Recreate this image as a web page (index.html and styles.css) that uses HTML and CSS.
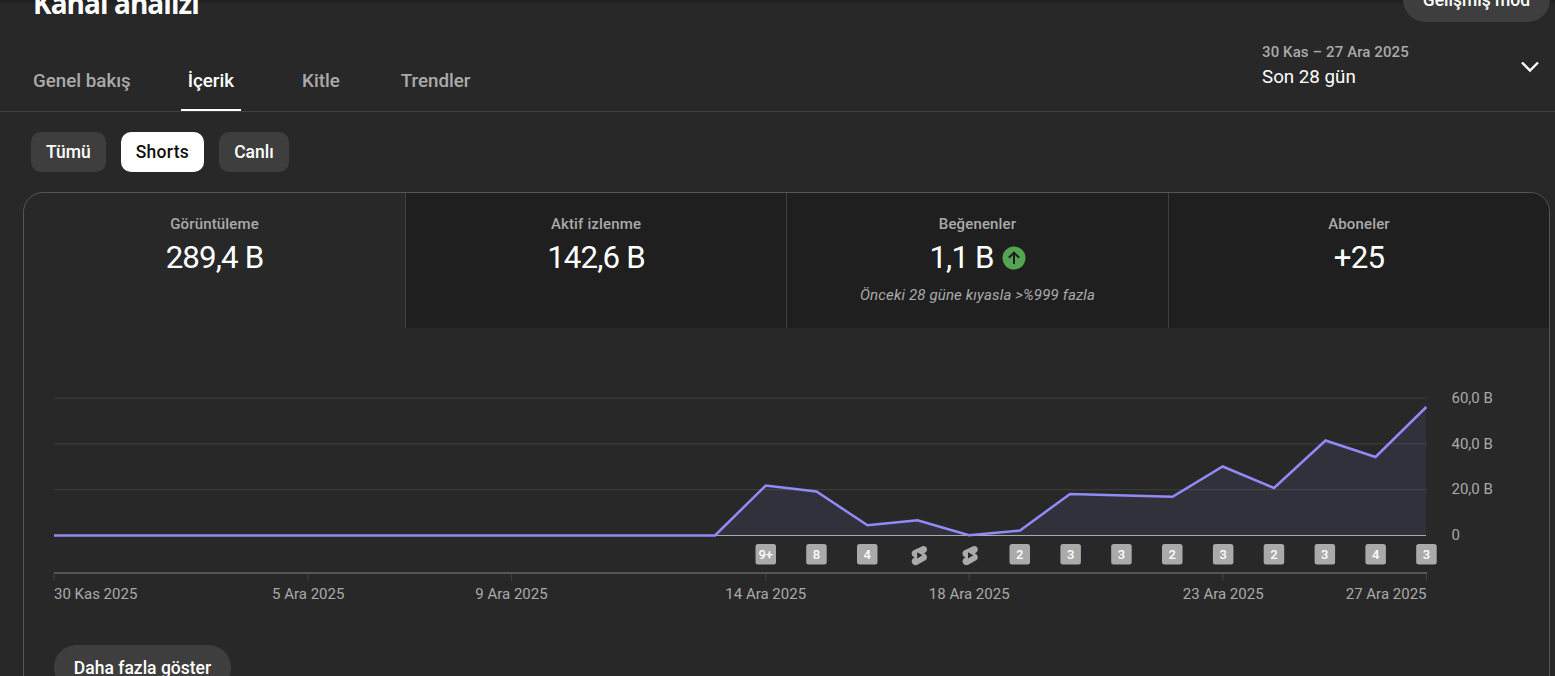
FILE: index.html
```html
<!DOCTYPE html>
<html lang="tr">
<head>
  <meta charset="UTF-8">
  <title>Kanal analizi</title>
  <link rel="stylesheet" href="styles.css">
</head>
<body>
  <div class="page">
    <header class="header">
      <h1>Kanal analizi</h1>
      <button class="pill advanced">Gelişmiş mod</button>
    </header>

    <div class="toolbar">
      <nav class="tabs">
        <a class="tab">Genel bakış</a>
        <a class="tab active">İçerik</a>
        <a class="tab audience">Kitle</a>
        <a class="tab trends">Trendler</a>
      </nav>
      <div class="date-picker">
        <div>
          <div class="date-range">30 Kas – 27 Ara 2025</div>
          <div class="date-label">Son 28 gün</div>
        </div>
        <svg class="chevron" width="20" height="14" viewBox="0 0 20 14">
          <path d="M2 2.500l8 8 8-8" fill="none" stroke="#fff" stroke-width="2.4"/>
        </svg>
      </div>
    </div>

    <div class="chips">
      <button class="chip">Tümü</button>
      <button class="chip selected">Shorts</button>
      <button class="chip">Canlı</button>
    </div>

    <section class="card">
      <div class="metrics">
        <div class="metric current">
          <div class="metric-name">Görüntüleme</div>
          <div class="metric-value">289,4 B</div>
        </div>
        <div class="metric">
          <div class="metric-name">Aktif izlenme</div>
          <div class="metric-value">142,6 B</div>
        </div>
        <div class="metric">
          <div class="metric-name">Beğenenler</div>
          <div class="metric-value">
            1,1 B
            <svg width="24" height="24" viewBox="0 0 24 24">
              <circle cx="12" cy="12" r="11.5" fill="#53a551"/>
              <path d="M12 18V7M6.8 11.8L12 6.6l5.2 5.2" fill="none" stroke="#1f1f1f" stroke-width="2"/>
            </svg>
          </div>
          <div class="metric-note">Önceki 28 güne kıyasla &gt;%999 fazla</div>
        </div>
        <div class="metric">
          <div class="metric-name">Aboneler</div>
          <div class="metric-value">+25</div>
        </div>
      </div>

      <svg class="chart" width="1525" height="317" viewBox="24 328 1525 317">
        <defs>
          <g id="short">
            <path d="M2.6 -8.9C5 -10.2 7.2 -8.8 7.7 -6.8C8.1 -5 7.3 -3.4 5.9 -2.5L4.7 -1.8C6.3 -1.5 7.4 -.3 7.7 1.2C8 3 7.1 4.5 5.7 5.3L-1.8 9.4C-4 10.6 -6.5 9.5 -7.3 7.3C-7.9 5.4 -7.1 3.5 -5.5 2.6L-4.4 2C-6 1.7 -7.2 .6 -7.5 -1C-7.8 -2.7 -7 -4.3 -5.5 -5.1Z" fill="#aaa"/>
            <path d="M-2 -3.1L3.3 0L-2 3.1Z" fill="#282828"/>
          </g>
        </defs>

        <!-- grid -->
        <g stroke="#3b3b3b" stroke-width="1.25">
          <path d="M54 398H1427M54 443.8H1427M54 489.5H1427"/>
        </g>
        <path d="M54 535.5H1426" stroke="#aaa" stroke-width="1"/>

        <!-- views -->
        <path d="M715 535L765.7 485.5L816.5 491.5L867.5 525.3L917.5 520.3L969 535.3L1020 530.5L1070 494L1172.5 496.7L1222.7 466.5L1274 488L1325.5 440.5L1375.5 457L1426 407V535Z" fill="#8383e0" fill-opacity=".11"/>
        <path d="M54 535.5H715L765.7 485.5L816.5 491.5L867.5 525.3L917.5 520.3L969 535.3L1020 530.5L1070 494L1172.5 496.7L1222.7 466.5L1274 488L1325.5 440.5L1375.5 457L1426.3 407" fill="none" stroke="#918bf8" stroke-width="2.5"/>

        <g class="axis-text">
          <text x="1451.5" y="403">60,0 B</text>
          <text x="1451.5" y="449">40,0 B</text>
          <text x="1451.5" y="494">20,0 B</text>
          <text x="1451.5" y="540">0</text>
        </g>

        <!-- published videos per day -->
        <g fill="#aaa">
          <rect x="755.5" y="544" width="20.5" height="20.5" rx="2.5"/>
          <rect x="806.2" y="544" width="20.5" height="20.5" rx="2.5"/>
          <rect x="857" y="544" width="20.5" height="20.5" rx="2.5"/>
          <rect x="1009.5" y="544" width="20.5" height="20.5" rx="2.5"/>
          <rect x="1060.4" y="544" width="20.5" height="20.5" rx="2.5"/>
          <rect x="1111.2" y="544" width="20.5" height="20.5" rx="2.5"/>
          <rect x="1162" y="544" width="20.5" height="20.5" rx="2.5"/>
          <rect x="1212.9" y="544" width="20.5" height="20.5" rx="2.5"/>
          <rect x="1263.7" y="544" width="20.5" height="20.5" rx="2.5"/>
          <rect x="1314.6" y="544" width="20.5" height="20.5" rx="2.5"/>
          <rect x="1365.4" y="544" width="20.5" height="20.5" rx="2.5"/>
          <rect x="1416.2" y="544" width="20.5" height="20.5" rx="2.5"/>
        </g>
        <use href="#short" x="919.2" y="555.3"/>
        <use href="#short" x="970" y="555.3"/>
        <g class="badge-text">
          <text x="765.7" y="559">9+</text>
          <text x="816.5" y="559">8</text>
          <text x="867.3" y="559">4</text>
          <text x="1019.8" y="559">2</text>
          <text x="1070.6" y="559">3</text>
          <text x="1121.4" y="559">3</text>
          <text x="1172.3" y="559">2</text>
          <text x="1223.1" y="559">3</text>
          <text x="1273.9" y="559">2</text>
          <text x="1324.8" y="559">3</text>
          <text x="1375.6" y="559">4</text>
          <text x="1426.4" y="559">3</text>
        </g>

        <!-- dates -->
        <path d="M54 573H1427" stroke="#555" stroke-width="2"/>
        <path d="M54 574V581M308 574V581M511.5 574V581M765.7 574V581M969 574V581M1223 574V581M1426.5 574V581" stroke="#3e3e3e" stroke-width="1.25"/>
        <g class="axis-text">
          <text x="54" y="599">30 Kas 2025</text>
          <text x="308.2" y="599" text-anchor="middle">5 Ara 2025</text>
          <text x="511.5" y="599" text-anchor="middle">9 Ara 2025</text>
          <text x="765.7" y="599" text-anchor="middle">14 Ara 2025</text>
          <text x="969.2" y="599" text-anchor="middle">18 Ara 2025</text>
          <text x="1223.2" y="599" text-anchor="middle">23 Ara 2025</text>
          <text x="1426.5" y="599" text-anchor="end">27 Ara 2025</text>
        </g>
      </svg>

      <button class="pill more">Daha fazla göster</button>
    </section>
  </div>
</body>
</html>
```
FILE: styles.css
```css
* {
  box-sizing: border-box;
}
body {
  margin: 0;
  background: #282828;
  color: #fff;
  font-family: Roboto, sans-serif;
  overflow: hidden;
}
button {
  border: none;
  font-family: inherit;
  color: #fff;
  padding: 0;
}
.page {
  height: 676px;
  overflow: hidden;
  background: linear-gradient(#1f1f1f, #282828 6px);
}
.header {
  display: flex;
  justify-content: space-between;
  align-items: flex-end;
  height: 45px;
  margin-top: -23px;
  padding: 0 5px 0 33px;
}
h1 {
  margin: 0;
  font-family: "Open Sans", sans-serif;
  font-size: 28px;
  line-height: 38px;
  font-weight: 700;
  letter-spacing: -0.95px;
}
.pill {
  height: 45px;
  border-radius: 23px;
  background: #3e3e3e;
  font-size: 17.5px;
  font-weight: 500;
}
.advanced {
  width: 147px;
}
.toolbar {
  display: flex;
  justify-content: space-between;
  height: 90px;
  border-bottom: 1px solid #404040;
}
.tabs {
  display: flex;
  align-items: flex-end;
  padding-left: 26px;
}
.tab {
  height: 62px;
  padding: 0 7px;
  font-size: 18.75px;
  line-height: 64px;
  font-weight: 500;
  color: #aaa;
}
.tab.active {
  margin-left: 43px;
  color: #fff;
  border-bottom: 2px solid #fff;
}
.tab.audience {
  margin-left: 54px;
}
.tab.trends {
  margin-left: 47px;
}
.date-picker {
  display: flex;
  justify-content: space-between;
  align-items: center;
  width: 293px;
  padding: 0 15px 0 0;
}
.date-range {
  font-size: 15px;
  line-height: 20px;
  font-weight: 500;
  letter-spacing: 0.1px;
  color: #aaa;
}
.date-label {
  font-size: 18.75px;
  line-height: 30px;
}
.chips {
  display: flex;
  gap: 15px;
  padding: 20px 31px;
}
.chip {
  height: 40px;
  padding: 0 15px;
  border-radius: 10px;
  background: #3e3e3e;
  font-size: 17.5px;
  font-weight: 500;
}
.chip.selected {
  background: #fff;
  color: #0f0f0f;
  letter-spacing: 0.3px;
}
.card {
  width: 1527px;
  height: 520px;
  margin-left: 23px;
  border: 1px solid #555;
  border-radius: 20px;
  overflow: hidden;
}
.metrics {
  display: grid;
  grid-template-columns: 381px 381px 382px 381px;
  height: 135px;
}
.metric {
  padding-top: 21px;
  background: #1f1f1f;
  border-left: 1px solid #404040;
  text-align: center;
}
.metric.current {
  background: none;
  border-left: none;
}
.metric-name {
  font-size: 15px;
  line-height: 20px;
  font-weight: 500;
  letter-spacing: 0.15px;
  color: #aaa;
}
.metric-value {
  display: flex;
  justify-content: center;
  align-items: center;
  gap: 8px;
  font-size: 31.25px;
  line-height: 48px;
  letter-spacing: -0.85px;
}
.metric-note {
  margin-top: 3px;
  font-size: 15px;
  line-height: 20px;
  font-style: italic;
  letter-spacing: 0.15px;
  color: #aaa;
}
.chart {
  display: block;
}
.axis-text {
  font-size: 15px;
  fill: #aaa;
}
.badge-text {
  font-size: 13px;
  font-weight: 500;
  fill: #fff;
  text-anchor: middle;
}
.more {
  width: 177px;
  margin-left: 30px;
}
```
